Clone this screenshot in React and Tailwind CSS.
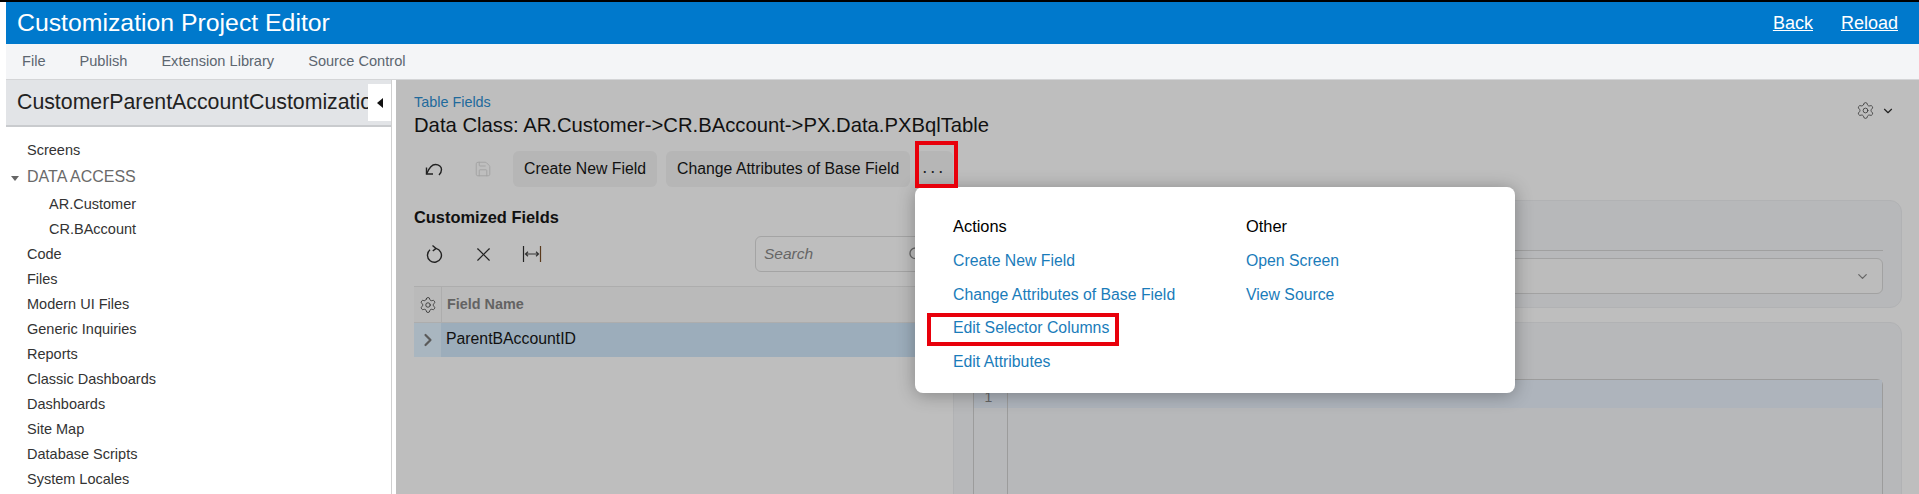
import { ChevronDown, ChevronRight, Save, Search, Settings, X } from 'lucide-react';

const menuItems = ['File', 'Publish', 'Extension Library', 'Source Control'];
const treeTop = ['Code', 'Files', 'Modern UI Files', 'Generic Inquiries', 'Reports', 'Classic Dashboards', 'Dashboards', 'Site Map', 'Database Scripts', 'System Locales'];

function UndoIcon() {
  return (
    <svg width="20" height="16" viewBox="0 0 20 16" fill="none" stroke="#222" strokeWidth="1.4">
      <path d="M2.5 6.5V13H9" />
      <path d="M2.5 13C5 7 8 3.5 11.5 3.5C15 3.5 17.5 6 17.5 8.5C17.5 10.5 16.5 12.5 15 14" />
    </svg>
  );
}

function RefreshIcon() {
  return (
    <svg width="20" height="20" viewBox="0 0 20 20" fill="none" stroke="#222" strokeWidth="1.4">
      <path d="M6 5.8A7 7 0 1 0 12 4.4" />
      <path d="M8.5 1.5L12 4.4L8.8 7" />
    </svg>
  );
}

function FitIcon() {
  return (
    <svg width="20" height="18" viewBox="0 0 20 18" fill="none" strokeWidth="1.2">
      <path d="M1.5 1V17" stroke="#222" />
      <path d="M18.5 1V17" stroke="#5a3a1c" />
      <path d="M3.5 9H16.5M6 6.8L3.5 9L6 11.2M14 6.8L16.5 9L14 11.2" stroke="#333" />
    </svg>
  );
}

function ToolbarButton({ children }) {
  return <button className="h-[36px] rounded-md bg-[#b6b6b6] px-[11px] text-[15.8px] text-[#111]">{children}</button>;
}

function PopupLink({ children }) {
  return <a className="flex h-[33.7px] items-center text-[15.8px] text-[#1a7cba]">{children}</a>;
}

export default function App() {
  return (
    <div className="relative flex h-[494px] w-[1919px] flex-col overflow-hidden border-t-2 border-black bg-white pl-[6px] font-['Liberation_Sans',Arial,sans-serif]">
      <header className="flex h-[42px] shrink-0 items-center justify-between bg-[#0079cc] pl-[11px] pr-[21px] text-white">
        <h1 className="text-[24.8px]">Customization Project Editor</h1>
        <div className="flex gap-[28px] text-[18px] underline">
          <a>Back</a>
          <a>Reload</a>
        </div>
      </header>

      <nav className="flex h-[36px] shrink-0 items-center gap-[34px] border-b border-[#d4d5d7] bg-[#f4f5f7] pl-[16px] text-[14.6px] text-[#5c6670]">
        {menuItems.map((item) => (
          <span key={item}>{item}</span>
        ))}
      </nav>

      <div className="flex min-h-0 flex-1">
        {/* Project tree */}
        <aside className="flex w-[386px] shrink-0 flex-col border-r border-[#d0d0d0]">
          <div className="relative flex h-[47px] shrink-0 items-center overflow-hidden border-b-2 border-[#c9cbce] bg-[#e2e4e7] pl-[11px]">
            <span className="whitespace-nowrap text-[21.3px] text-[#222]">CustomerParentAccountCustomization</span>
            <span className="absolute right-0 top-[4px] flex h-[37px] w-[23px] items-center justify-center bg-white">
              <svg width="6" height="10" viewBox="0 0 6 10">
                <polygon points="6,0 6,10 0,5" fill="#111" />
              </svg>
            </span>
          </div>
          <ul className="pt-[11px] text-[14.5px] text-[#333]">
            <li className="flex h-[25px] items-center pl-[21px]">Screens</li>
            <li className="relative mb-[2px] flex h-[27px] items-center pl-[21px] text-[16px] text-[#6a6a6a]">
              <svg className="absolute left-[5px] top-[13px]" width="8" height="5" viewBox="0 0 8 5">
                <polygon points="0,0 8,0 4,5" fill="#666" />
              </svg>
              DATA ACCESS
            </li>
            <li className="flex h-[25px] items-center pl-[43px]">AR.Customer</li>
            <li className="flex h-[25px] items-center pl-[43px]">CR.BAccount</li>
            {treeTop.map((item) => (
              <li key={item} className="flex h-[25px] items-center pl-[21px]">{item}</li>
            ))}
          </ul>
        </aside>

        <div className="w-[4px] shrink-0 bg-white" />

        {/* Dimmed editor area */}
        <main className="flex min-w-0 flex-1 flex-col bg-[#bebebe]">
          <div className="flex items-start justify-between pl-[18px] pr-[24px] pt-[13px]">
            <div>
              <a className="block h-[18px] text-[14.4px] leading-[18px] text-[#1f6a9c]">Table Fields</a>
              <div className="mt-[2px] h-[24px] text-[20.25px] leading-[24px] text-[#111]">Data Class: AR.Customer-&gt;CR.BAccount-&gt;PX.Data.PXBqlTable</div>
            </div>
            <div className="flex items-center gap-[6px] pt-[8px] text-[#333]">
              <Settings size={19} strokeWidth={1} />
              <ChevronDown size={14} strokeWidth={2} className="text-[#222]" />
            </div>
          </div>

          <div className="mt-[14px] flex h-[36px] items-center pl-[17px]">
            <span className="flex w-[42px] justify-center"><UndoIcon /></span>
            <span className="flex w-[56px] justify-center"><Save size={18} strokeWidth={1.2} className="text-[#a2a2a2]" /></span>
            <div className="ml-[2px] flex gap-[9px]">
              <ToolbarButton>Create New Field</ToolbarButton>
              <ToolbarButton>Change Attributes of Base Field</ToolbarButton>
            </div>
            <span className="ml-[5px] flex h-[36px] w-[38px] items-center justify-center rounded-md bg-[#b6b6b6] pb-[4px] text-[18px] tracking-[3px] text-[#222]">...</span>
          </div>

          <div className="mt-[13px] flex min-h-0 flex-1">
            <section className="w-[557px] shrink-0 pl-[18px] pr-[18px]">
              <h2 className="mt-[7px] h-[20px] text-[16.4px] font-bold leading-[20px] text-[#111]">Customized Fields</h2>
              <div className="mt-[9px] flex h-[36px] items-center justify-between">
                <div className="flex items-center">
                  <span className="-ml-[1px] flex w-[42px] justify-center"><RefreshIcon /></span>
                  <span className="flex w-[56px] justify-center"><X size={23} strokeWidth={1.2} className="text-[#222]" /></span>
                  <span className="flex w-[42px] justify-center"><FitIcon /></span>
                </div>
                <div className="flex h-[36px] w-[180px] items-center justify-between rounded-md border border-[#a4a4a4] pl-[8px] pr-[10px]">
                  <span className="text-[15.5px] italic text-[#666]">Search</span>
                  <Search size={16} className="text-[#666]" />
                </div>
              </div>
              <div className="mt-[14px] flex h-[37px] border-y border-[#adadad] bg-[#bababa]">
                <span className="flex w-[28px] items-center justify-center border-r border-[#adadad]">
                  <Settings size={18} strokeWidth={1} className="text-[#222]" />
                </span>
                <span className="pl-[5px] text-[14.4px] font-bold leading-[35px] text-[#636363]">Field Name</span>
              </div>
              <div className="flex h-[34px]">
                <span className="flex w-[27px] items-center justify-center bg-[#a9b6c0]">
                  <ChevronRight size={20} strokeWidth={2.6} className="text-[#5a5a5a]" />
                </span>
                <span className="flex-1 bg-[#9cadbb] pl-[5px] text-[15.8px] leading-[32px] text-[#111]">ParentBAccountID</span>
              </div>
            </section>

            <section className="flex min-w-0 flex-1 flex-col pr-[17px]">
              <div className="h-[108px] shrink-0 rounded-xl border border-[#b1b2b4] bg-[#b7b8ba] px-[18px] pt-[49px]">
                <div className="border-t border-[#a0a0a0] pt-[7px]">
                  <div className="flex h-[36px] items-center justify-end rounded-md border border-[#a2a2a2] bg-[#bcbcbc] pr-[12px]">
                    <ChevronDown size={15} className="text-[#666]" />
                  </div>
                </div>
              </div>
              <div className="mt-[14px] flex flex-1 rounded-t-xl border border-[#b1b2b4] bg-[#b7b8ba] pl-[19px] pr-[18px] pt-[56px]">
                <div className="flex-1 self-stretch rounded-tr-md border-l border-r border-t border-[#9c9c9c]">
                  <div className="h-[28px] bg-[#aeb4bc]">
                    <span className="block h-[28px] w-[34px] border-r border-[#9c9c9c] pr-[4px] pt-[10px] text-center text-[14px] leading-[14px] text-[#666]">1</span>
                  </div>
                  <div className="h-[90px] w-[34px] border-r border-[#9c9c9c]" />
                </div>
              </div>
            </section>
          </div>
        </main>
      </div>

      {/* Actions menu */}
      <div className="absolute left-[915px] top-[185px] flex h-[206px] w-[600px] rounded-lg bg-white pl-[38px] pt-[24px] shadow-[0_2px_18px_rgba(0,0,0,0.3)]">
        <div className="w-[293px]">
          <h3 className="mb-[3px] h-[30px] text-[16.4px] leading-[30px] text-black">Actions</h3>
          <PopupLink>Create New Field</PopupLink>
          <PopupLink>Change Attributes of Base Field</PopupLink>
          <PopupLink>Edit Selector Columns</PopupLink>
          <PopupLink>Edit Attributes</PopupLink>
        </div>
        <div>
          <h3 className="mb-[3px] h-[30px] text-[16.4px] leading-[30px] text-black">Other</h3>
          <PopupLink>Open Screen</PopupLink>
          <PopupLink>View Source</PopupLink>
        </div>
      </div>

      {/* Red annotation boxes */}
      <div className="pointer-events-none absolute left-[915px] top-[139px] h-[47px] w-[43px] border-[4px] border-[#e8000b]" />
      <div className="pointer-events-none absolute left-[927px] top-[311px] h-[33px] w-[192px] border-[4px] border-[#e8000b]" />
    </div>
  );
}
